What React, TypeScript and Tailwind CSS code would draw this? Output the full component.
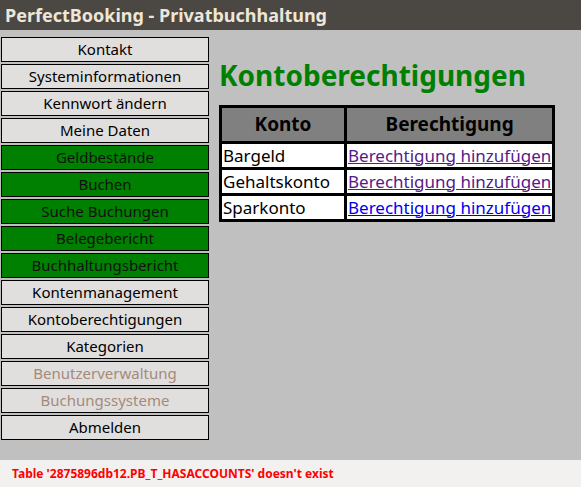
export default function App() {
  const items: [string, string][] = [
    ["Kontakt", "n"], ["Systeminformationen", "n"], ["Kennwort ändern", "n"], ["Meine Daten", "n"],
    ["Geldbestände", "g"], ["Buchen", "g"], ["Suche Buchungen", "g"], ["Belegebericht", "g"], ["Buchhaltungsbericht", "g"],
    ["Kontenmanagement", "n"], ["Kontoberechtigungen", "n"], ["Kategorien", "n"],
    ["Benutzerverwaltung", "d"], ["Buchungssysteme", "d"], ["Abmelden", "n"],
  ];
  const rows = [["Bargeld", "text-[#551a8b]"], ["Gehaltskonto", "text-[#551a8b]"], ["Sparkonto", "text-[#0000ee]"]];
  return (
    <div className="w-[581px] h-[487px] bg-[#c0c0c0] flex flex-col font-['Liberation_Serif',serif]">
      <div className="h-[30px] bg-[#4b4844] text-[#eee6d8] font-['DejaVu_Sans',sans-serif] font-bold text-[18px] leading-[30px] px-[5px]">
        PerfectBooking - Privatbuchhaltung
      </div>
      <div className="flex flex-1 pt-[7px]">
        <div className="w-[208px] ml-[1px] flex flex-col gap-[2px]">
          {items.map(([label, kind]) => (
            <div
              key={label}
              className={
                "h-[25px] border border-black text-center text-[15px] leading-[23px] " +
                (kind === "g" ? "bg-[#008000] text-[#111]" : kind === "d" ? "bg-[#e0dfde] text-[#a58a7a]" : "bg-[#e0dfde] text-black")
              }
            >
              {label}
            </div>
          ))}
        </div>
        <div className="ml-[10px] flex flex-col">
          <h1 className="text-[#008000] font-bold text-[28px] leading-[32px] mt-[22px]">Kontoberechtigungen</h1>
          <table className="mt-[14px] border-[3px] border-black border-collapse font-['DejaVu_Sans',sans-serif] text-[17px]">
            <thead>
              <tr className="bg-[#808080] h-[36px]">
                <th className="border-[3px] border-black w-[125px] font-bold text-[19px]">Konto</th>
                <th className="border-[3px] border-black font-bold text-[19px]">Berechtigung</th>
              </tr>
            </thead>
            <tbody>
              {rows.map(([name, c]) => (
                <tr key={name} className="bg-white h-[26px]">
                  <td className="border-[3px] border-black px-[1px] leading-[20px]">{name}</td>
                  <td className="border-[3px] border-black px-[1px] leading-[20px]">
                    <a href="#" className={"underline " + c}>Berechtigung hinzufügen</a>
                  </td>
                </tr>
              ))}
            </tbody>
          </table>
        </div>
      </div>
      <div className="h-[27px] bg-[#f2f1f0] text-[#ff0000] font-bold text-[12px] leading-[27px] pl-[12px]">
        Table '2875896db12.PB_T_HASACCOUNTS' doesn't exist
      </div>
    </div>
  );
}
